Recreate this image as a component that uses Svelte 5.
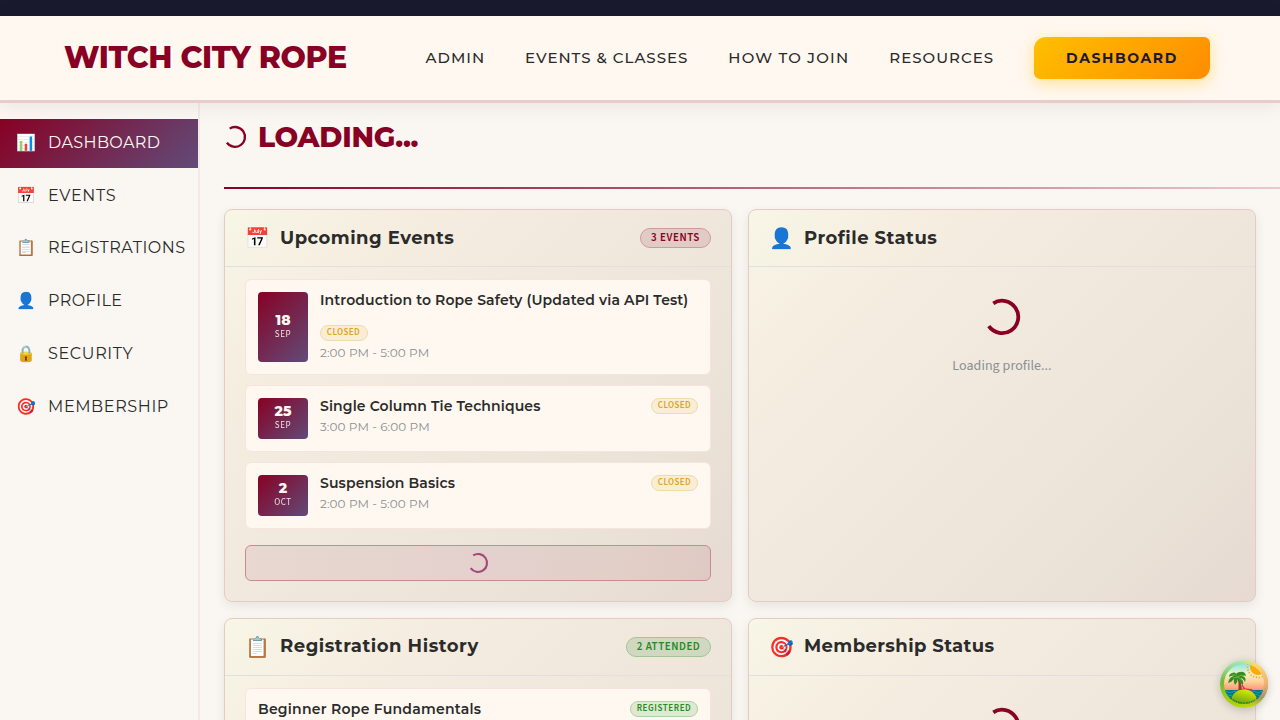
<script>
  const nav = [
    ['ADMIN', 'n1'],
    ['EVENTS & CLASSES', 'n2'],
    ['HOW TO JOIN', 'n3'],
    ['RESOURCES', 'n4']
  ];
  const side = [
    ['📊', 'DASHBOARD', 's1'],
    ['📅', 'EVENTS', 's2'],
    ['📋', 'REGISTRATIONS', 's3'],
    ['👤', 'PROFILE', 's4'],
    ['🔒', 'SECURITY', 's5'],
    ['🎯', 'MEMBERSHIP', 's6']
  ];
  const events = [
    { day: '18', month: 'SEP', title: 'Introduction to Rope Safety (Updated via API Test)', time: '2:00 PM - 5:00 PM', wrap: true },
    { day: '25', month: 'SEP', title: 'Single Column Tie Techniques', time: '3:00 PM - 6:00 PM' },
    { day: '2', month: 'OCT', title: 'Suspension Basics', time: '2:00 PM - 5:00 PM' }
  ];
</script>

{#snippet arc(size, color)}
  <svg class="arc" width={size} height={size} viewBox="0 0 36 36" fill="none" stroke={color}>
    <path d="M9.3 4.3A16.2 16.2 0 1 1 4.8 27.2" stroke-width="3.8" />
  </svg>
{/snippet}

<div class="topbar"></div>
<header class="header">
  <div class="brand"><span>WITCH CITY ROPE</span></div>
  <nav>
    {#each nav as [label, cls]}
      <div class="link {cls}"><span>{label}</span></div>
    {/each}
    <div class="cta"><span>DASHBOARD</span></div>
  </nav>
</header>

<div class="layout">
  <aside>
    {#each side as [icon, label, cls], i}
      <div class="item {cls}" class:active={i === 0}><i class="emoji">{icon}</i><span>{label}</span></div>
    {/each}
  </aside>

  <main>
    <div class="heading">
      {@render arc(22, '#880124')}
      <h1>LOADING...</h1>
    </div>
    <div class="rule"></div>

    <div class="grid">
      <section class="card">
        <div class="head"><i class="emoji">📅</i><h2>Upcoming Events</h2><b class="badge red">3 EVENTS</b></div>
        <div class="body">
          {#each events as e}
            <div class="event" class:wrap={e.wrap}>
              <div class="date"><strong>{e.day}</strong><small>{e.month}</small></div>
              <div class="info">
                <div class="row"><h3>{e.title}</h3><b class="pill gold">CLOSED</b></div>
                <p>{e.time}</p>
              </div>
            </div>
          {/each}
          <div class="button">{@render arc(20, '#a04b7b')}</div>
        </div>
      </section>

      <section class="card">
        <div class="head"><i class="emoji">👤</i><h2>Profile Status</h2></div>
        <div class="loading">{@render arc(36, '#880124')}<p>Loading profile...</p></div>
      </section>

      <section class="card lower">
        <div class="head"><i class="emoji">📋</i><h2>Registration History</h2><b class="badge green">2 ATTENDED</b></div>
        <div class="body">
          <div class="event reg">
            <h3>Beginner Rope Fundamentals</h3><b class="pill lime">REGISTERED</b>
          </div>
        </div>
      </section>

      <section class="card lower">
        <div class="head"><i class="emoji">🎯</i><h2 class="tight">Membership Status</h2></div>
        <div class="loading">{@render arc(36, '#880124')}</div>
      </section>
    </div>
  </main>
</div>

<div class="island">
  <svg width="48" height="48" viewBox="0 0 48 48">
    <defs>
      <linearGradient id="ring" x1="0" y1="0" x2="0" y2="1"><stop offset="0" stop-color="#a8ecc0" /><stop offset=".45" stop-color="#73b73c" /><stop offset="1" stop-color="#b8d900" /></linearGradient>
      <linearGradient id="ringr" x1="0" y1="0" x2="0" y2="1"><stop offset="0" stop-color="#ffe46a" /><stop offset=".5" stop-color="#f5ad73" /><stop offset=".78" stop-color="#a0976a" /><stop offset="1" stop-color="#d5e000" /></linearGradient>
      <linearGradient id="fade" x1="0" y1="0" x2="1" y2="0"><stop offset=".4" stop-color="#000" /><stop offset=".75" stop-color="#fff" /></linearGradient>
      <mask id="right"><rect width="48" height="48" fill="url(#fade)" /></mask>
      <linearGradient id="sky" x1="0" y1="0" x2="0" y2="1"><stop offset="0" stop-color="#6bdcf5" /><stop offset=".28" stop-color="#e9f5c8" /><stop offset=".45" stop-color="#ffd29a" /><stop offset=".68" stop-color="#ff806d" /></linearGradient>
      <linearGradient id="land" x1=".3" y1="1" x2=".7" y2="0"><stop offset="0" stop-color="#4c9b19" /><stop offset="1" stop-color="#e3ec00" /></linearGradient>
      <clipPath id="disc"><circle cx="24" cy="24" r="20" /></clipPath>
    </defs>
    <circle cx="24" cy="24" r="24" fill="url(#ring)" />
    <circle cx="24" cy="24" r="24" fill="url(#ringr)" mask="url(#right)" />
    <g clip-path="url(#disc)">
      <rect width="48" height="48" fill="url(#sky)" />
      <circle cx="38" cy="7" r="10.5" fill="none" stroke="#ff9d22" stroke-width="1.7" stroke-dasharray="1.2 1.7" />
      <circle cx="38" cy="7" r="8" fill="#ffaa00" />
      <rect y="30" width="48" height="18" fill="#087783" />
      <path d="M4 32q2-1.6 4 0t4 0t4 0M32 32q2-1.6 4 0t4 0t4 0M4 35q2-1.6 4 0t4 0M34 35q2-1.6 4 0t4 0" stroke="#08a8b5" stroke-width=".9" fill="none" />
      <path d="M22 25l2.5 4 7 .8v2M20 31l5-3" stroke="#e81f6a" stroke-width="1.3" fill="none" />
      <path d="M17 17q2.5 6 1 15h4q0-9-4-15z" fill="#8a4a20" />
      <path d="M18 17q-2-6-6-4-3 1-3 4 3-2 5-1-5 1-6 7 4-1 6-4-1 3 1 6 3-3 3-7 1 5 5 7 1-5-3-7 3 0 5 4 2-5-3-6 2-1 4 0-1-5-6-4-4 0-5 5z" fill="#368b27" />
      <path d="M12 15q4-1 6 2 3-3 6-1M13 18l5-1 5 4" stroke="#67b535" stroke-width="1" fill="none" />
      <path d="M10 42q3-12.5 14-12.5t14 12.5v4H10z" fill="url(#land)" />
      <path d="M11 38q5.5 5 13 5t13-5" fill="none" stroke="#174d35" stroke-width=".9" stroke-dasharray="1.5 1.2" />
    </g>
  </svg>
</div>

<style>
  :global(body) { background: #faf7f2; overflow: hidden; height: 720px; }
  :global(*) { box-sizing: border-box; }
  :global(#app) { height: 720px; overflow: hidden; font-family: Montserrat, Inter, sans-serif; color: #2b2b2b; }
  h1, h2, h3, p { margin: 0; white-space: nowrap; }
  span { white-space: nowrap; }
  .emoji { font-family: 'Noto Color Emoji', sans-serif; font-style: normal; }
  .arc { display: block; flex: none; overflow: visible; }

  .topbar { height: 16px; background: #1a1a2e; }
  .header { position: relative; z-index: 2; height: 87px; display: flex; align-items: center; justify-content: space-between; padding: 0 70px 0 64px; background: #fff8f0; border-bottom: 3px solid #e9cbc9; box-shadow: 0 2px 20px rgba(0, 0, 0, .08); }
  .brand { color: #880124; font-weight: 800; font-size: 30px; letter-spacing: -.38px; line-height: 40px; }
  nav { display: flex; align-items: center; gap: 40px; }
  .link { font-size: 15px; font-weight: 500; letter-spacing: 1px; line-height: 24px; }
  .n2 { letter-spacing: .98px; }
  .n3 { letter-spacing: 1.2px; }
  .cta { width: 176px; height: 42px; display: flex; align-items: center; justify-content: center; border-radius: 12px 6px 12px 6px; background: linear-gradient(135deg, #ffbf00, #ff8c00); box-shadow: 0 4px 15px rgba(255, 191, 0, .4); color: #1a1a2e; font-size: 14px; font-weight: 700; letter-spacing: 1.6px; }

  .layout { display: flex; height: 617px; }
  aside { width: 200px; flex: none; border-right: 2px solid #f3e9e6; padding-top: 16px; display: flex; flex-direction: column; gap: 4px; }
  .item { height: 48.8px; flex: none; display: flex; align-items: center; padding: 0 0 2px 16px; font-size: 16px; font-weight: 400; letter-spacing: .5px; color: #2b2b2b; }
  .item .emoji { width: 32px; font-size: 16px; letter-spacing: 0; }
  .item.active { background: linear-gradient(135deg, #880124, #614b79); color: #fff8f0; }
  .s1 { letter-spacing: .38px; }
  .s2 { letter-spacing: .72px; }
  .s4 { letter-spacing: .42px; }
  .s6 { letter-spacing: .62px; }
  .s5 { letter-spacing: .65px; }

  main { width: 1080px; padding: 16px 0 0 24px; flex: none; }
  .heading { height: 36px; display: flex; align-items: center; gap: 12px; color: #880124; }
  h1 { font-size: 28px; font-weight: 800; line-height: 36px; letter-spacing: -.28px; }
  .rule { height: 2px; margin-top: 32px; background: linear-gradient(90deg, #880124, #e9cbc9); }
  .grid { margin-top: 20px; width: 1032px; display: grid; grid-template-columns: 508px 508px; grid-template-rows: 393px 393px; gap: 16px; }
  .card { border: 1px solid #e5cbc5; border-radius: 8px; background: linear-gradient(135deg, #f8f6e6 0%, #f5ede0 22%, #ece4d9 70%, #e6dad2 100%); box-shadow: 0 4px 12px rgba(0, 0, 0, .08); }
  .head { height: 57px; border-bottom: 1px solid #dfe0e4; display: flex; align-items: center; padding: 0 20px; }
  .head .emoji { width: 35px; font-size: 20px; line-height: 24px; }
  h2 { font-size: 18px; font-weight: 700; letter-spacing: .48px; line-height: 26px; }
  .tight { letter-spacing: .4px; }
  .lower h2 { margin-top: -2px; letter-spacing: .53px; }
  .lower h2.tight { letter-spacing: .4px; }
  .badge, .pill, .date small, .loading p { font-family: 'Source Sans 3', 'Source Sans Pro', 'Noto Sans CJK SC', sans-serif; }
  .badge, .pill { font-weight: 600; display: flex; align-items: center; justify-content: center; border: 1px solid; flex: none; }
  .badge { margin-left: auto; height: 20px; border-radius: 10px; font-size: 11px; letter-spacing: .55px; line-height: 18px; padding-bottom: 1px; }
  .red { width: 71px; color: #880124; background: #e2cbc5; border-color: #cc9b9e; }
  .green { width: 85px; color: #228b22; background: #d0d8c0; border-color: #a2c49a; }
  .body { padding: 12px 20px; }
  .event { height: 67px; margin-bottom: 10px; display: flex; gap: 12px; padding: 12px; background: #fff8f0; border: 1px solid #f6e5df; border-radius: 6px; }
  .event.wrap { height: 96px; }
  .date { width: 50px; flex: none; border-radius: 4px; background: linear-gradient(135deg, #880124, #614b79); color: #fff8f0; display: flex; flex-direction: column; align-items: center; justify-content: center; padding-bottom: 2px; }
  .wrap .date { padding-bottom: 0; }
  .date strong { font-size: 14px; font-weight: 800; line-height: 14px; }
  .date small { font-size: 9px; letter-spacing: .6px; line-height: 12px; padding-top: 2px; opacity: .9; }
  .info { flex: 1; }
  .row { display: flex; justify-content: space-between; }
  h3 { font-size: 14px; font-weight: 600; line-height: 17px; letter-spacing: .12px; }
  .reg h3 { letter-spacing: .25px; }
  .pill { height: 16px; border-radius: 8px; font-size: 9px; letter-spacing: .4px; line-height: 14px; padding-bottom: 1px; }
  .gold { width: 47px; color: #daa520; background: #faedd6; border-color: #f1dba9; }
  .wrap .gold { width: 48px; padding-right: 1px; }
  .lime { width: 68px; color: #228b22; background: #dfe8d1; border-color: #b1d1a8; padding-bottom: 0; letter-spacing: .6px; }
  .info p { font-size: 12px; line-height: 16px; margin-top: 4px; color: #8b8f94; letter-spacing: .1px; }
  .wrap .row { flex-direction: column; gap: 16px; }
  .button { height: 36px; margin-top: 16px; border: 1px solid #c98a92; border-radius: 6px; background: linear-gradient(100deg, #e8d8d1, #e4d0cd 55%, #e2cfc8 80%, #dfc9c4); display: flex; align-items: center; justify-content: center; }
  .loading { height: 130px; padding-top: 32px; display: flex; flex-direction: column; align-items: center; }
  .loading p { font-size: 14px; line-height: 20px; letter-spacing: .05px; color: #8b8f94; margin-top: 21px; }
  .reg { justify-content: space-between; }
  .island { position: absolute; left: 1220px; top: 660px; width: 48px; height: 48px; border-radius: 50%; box-shadow: 0 2px 8px rgba(0, 0, 0, .2); z-index: 3; }
  .island svg { display: block; }
</style>
